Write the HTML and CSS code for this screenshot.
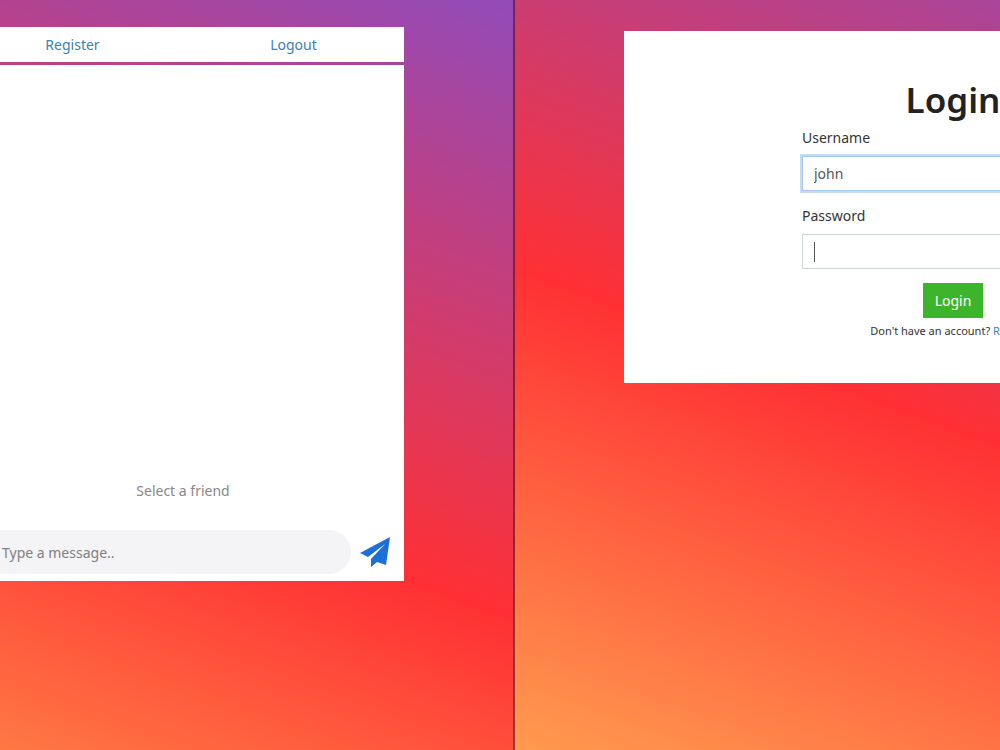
FILE: index.html
```
<!DOCTYPE html>
<html lang="en">
<head>
    <meta charset="UTF-8">
    <meta name="viewport" content="width=device-width, initial-scale=1.0">
    <title>Chat</title>
    <link rel="stylesheet" href="styles.css">
</head>
<body>
    <div class="window chat-window">
        <div class="chat">
            <nav class="chat-nav">
                <a href="#register">Register</a>
                <a href="#logout">Logout</a>
            </nav>
            <div class="chat-box">
                <div class="messages">
                    <p class="empty">Select a friend</p>
                </div>
                <form class="message-form">
                    <input type="text" class="message-input" aria-label="Message" placeholder="Type a message..">
                    <button type="button" class="send" aria-label="Send">
                        <svg viewBox="0 0 30 30" width="30" height="30">
                            <path d="M30 0 L0 16 L8 20 L25 7 L11 22 L11 30 L17 25 L26 28 Z" fill="#1d6fd8"/>
                        </svg>
                    </button>
                </form>
            </div>
        </div>
    </div>

    <div class="window login-window">
        <div class="login-card">
            <form class="login-form">
                <h1>Login</h1>
                <label for="username">Username</label>
                <input type="text" id="username" class="field field-active" value="john">
                <label for="password">Password</label>
                <input type="password" id="password" class="field field-caret">
                <button type="button" class="login-btn">Login</button>
                <p class="signup">Don't have an account? <a href="#register">Register</a></p>
            </form>
        </div>
    </div>
</body>
</html>
```
FILE: styles.css
```
* {
    box-sizing: border-box;
}
body {
    margin: 0;
    display: flex;
    min-height: 100vh;
    overflow: hidden;
    font-family: "Noto Sans", "Open Sans", sans-serif;
    font-size: 14px;
    color: #333;
}
a {
    color: #3b82b0;
    text-decoration: none;
}
.window {
    min-width: 0;
    overflow: hidden;
}
.chat-window {
    width: 51.5%;
    padding: 27px 109px 0 0;
    border-right: 2px solid rgba(70, 20, 40, 0.6);
    background: linear-gradient(20deg, #ff7844 0%, #ff3034 34%, #924bb9 100%);
}
.login-window {
    flex: 1;
    padding: 31px 0 0 109px;
    background: linear-gradient(20deg, #ff9b4f 0%, #ff3034 52%, #a9459a 100%);
}

/* chat */
.chat {
    margin-left: -38px;
}
.chat-nav {
    display: grid;
    grid-template-columns: 1fr 1fr;
    padding-top: 1px;
    background: white;
    text-align: center;
    line-height: 34px;
}
.chat-box {
    margin-top: 3px;
    background: white;
}
.messages {
    display: flex;
    align-items: flex-end;
    justify-content: center;
    height: 465px;
    padding-bottom: 28px;
}
.empty {
    margin: 0;
    line-height: 22px;
    color: #888;
}
.message-form {
    display: flex;
    align-items: center;
    gap: 9px;
    padding: 0 14px 7px 10px;
}
.message-input {
    flex: 1;
    min-width: 0;
    height: 44px;
    padding: 0 30px;
    border: none;
    border-radius: 22px;
    background: #f4f4f6;
    font: inherit;
}
.message-input::placeholder {
    color: #808080;
}
.send {
    display: flex;
    padding: 0;
    border: none;
    background: none;
}

/* login */
.login-card {
    width: 175%;
    padding: 45px 0 43px;
    background: white;
}
.login-form {
    display: flex;
    flex-direction: column;
    width: 302px;
    margin: 0 auto;
}
h1 {
    margin: 0 0 3px;
    font-size: 35px;
    font-weight: 600;
    line-height: 48px;
    text-align: center;
    color: #222;
}
label {
    line-height: 22px;
    margin-bottom: 7px;
}
.field {
    height: 35px;
    margin-bottom: 14px;
    padding: 0 11px;
    border: 1px solid #ccd2d8;
    font: inherit;
    color: #555;
}
.field-active {
    border-color: #a5c8f2;
    box-shadow: 0 0 0 2px #c8daf0;
}
.field-caret {
    background: linear-gradient(#555, #555) 11px center / 1px 20px no-repeat;
}
.login-btn {
    align-self: center;
    width: 60px;
    height: 35px;
    padding: 0;
    border: none;
    background: #3db52b;
    color: white;
    font: inherit;
}
.signup {
    margin: 4px 0 0;
    font-size: 11px;
    line-height: 18px;
    text-align: center;
}
```
